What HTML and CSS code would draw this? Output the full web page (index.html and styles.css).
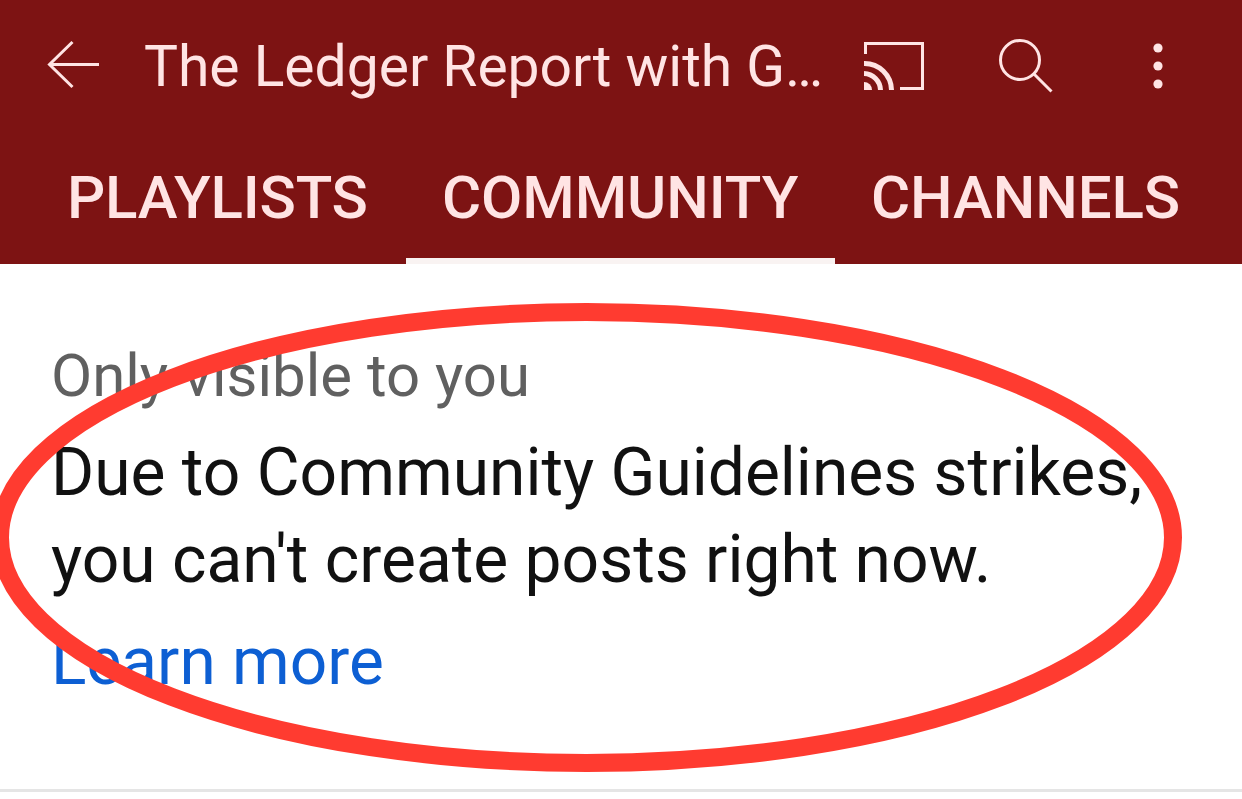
FILE: index.html
```
<!DOCTYPE html>
<html lang="en">
<head>
  <meta charset="UTF-8">
  <meta name="viewport" content="width=device-width, initial-scale=1.0">
  <title>The Ledger Report - Community</title>
  <link rel="stylesheet" href="styles.css">
</head>
<body>
<header class="page-header">
  <div class="app-bar">
    <svg class="icon icon-back" viewBox="0 0 54 50" fill="none" stroke="currentColor" stroke-width="3">
      <path d="M3 24.5H53M26.5 2L3.5 24.5L26.5 47"/>
    </svg>
    <h1 class="title">The Ledger Report with G…</h1>
    <svg class="icon icon-cast" viewBox="0 0 60 48" fill="none" stroke="currentColor">
      <path stroke-width="3" d="M1.5 12V1.5H58.5V46.5H36"/>
      <path stroke-width="5" d="M0 21.5A27 27 0 0 1 27.5 48M0 31.5A17 17 0 0 1 16.5 48"/>
      <path fill="currentColor" stroke="none" d="M0 40A8 8 0 0 1 8 48H0Z"/>
    </svg>
    <svg class="icon icon-search" viewBox="0 0 54 54" fill="none" stroke="currentColor" stroke-width="3">
      <circle cx="21" cy="21" r="19.5"/>
      <path d="M34.5 34.5L52.5 52.5"/>
    </svg>
    <svg class="icon icon-more" viewBox="0 0 10 46" fill="currentColor">
      <circle cx="5" cy="5" r="4.6"/>
      <circle cx="5" cy="23" r="4.6"/>
      <circle cx="5" cy="41" r="4.6"/>
    </svg>
  </div>
  <nav class="tabs">
    <a class="tab tab-playlists">PLAYLISTS</a>
    <a class="tab tab-community active">COMMUNITY</a>
    <a class="tab tab-channels">CHANNELS</a>
  </nav>
</header>
<main class="notice">
  <p class="visibility">Only visible to you</p>
  <p class="message">Due to Community Guidelines strikes,<br>you can't create posts right now.</p>
  <a class="learn-more">Learn more</a>
  <svg class="highlight" viewBox="0 0 1242 528" fill="none">
    <ellipse cx="586.5" cy="273.5" rx="586.5" ry="225.5"/>
  </svg>
</main>
</body>
</html>
```

FILE: styles.css
```
* {
  box-sizing: border-box;
}
body {
  font-family: Roboto, "Liberation Sans", sans-serif;
  background-color: #fff;
  margin: 0;
  color: #111;
  overflow: hidden;
}
.page-header {
  background-color: #7d1313;
  color: #ffe4e4;
  height: 264px;
}
.app-bar {
  display: flex;
  align-items: center;
  height: 132px;
  padding-left: 46px;
}
.icon {
  flex: none;
  display: block;
}
.icon-back {
  width: 54px;
  height: 50px;
  margin-bottom: 2px;
}
.title {
  width: 718px;
  margin: 0;
  padding: 2px 0 0 44px;
  font-size: 57px;
  font-weight: 400;
  line-height: 132px;
  letter-spacing: -0.02px;
  white-space: nowrap;
}
.icon-cast {
  width: 60px;
  height: 48px;
  margin-left: 46px;
}
.icon-search {
  width: 54px;
  height: 54px;
  margin-left: 75px;
}
.icon-more {
  width: 10px;
  height: 46px;
  margin-left: 100px;
}
.tabs {
  display: flex;
  height: 132px;
}
.tab {
  font-size: 60px;
  font-weight: 500;
  line-height: 131px;
  letter-spacing: -0.1px;
  white-space: nowrap;
}
.tab-playlists {
  width: 406px;
  padding-left: 67px;
  letter-spacing: -0.2px;
}
.tab-community {
  width: 429px;
  padding-left: 36px;
}
.tab-channels {
  width: 407px;
  padding-left: 36px;
}
.tab.active {
  box-shadow: inset 0 -6px #f9f3f2;
}
.notice {
  position: relative;
  height: 528px;
  padding: 77px 0 0 51px;
  border-bottom: 3px solid #e5e5e5;
}
.visibility {
  margin: 0 0 18px;
  font-size: 59.9px;
  line-height: 70px;
  color: #606060;
}
.message {
  margin: 0 0 24px;
  font-size: 65.9px;
  line-height: 87px;
  white-space: nowrap;
}
.learn-more {
  display: block;
  font-size: 65.8px;
  line-height: 70px;
  color: #0d5fd3;
}
.highlight {
  position: absolute;
  top: 0;
  left: 0;
  width: 1242px;
  height: 528px;
}
.highlight ellipse {
  stroke: #ff3b30;
  stroke-width: 18px;
}
```
